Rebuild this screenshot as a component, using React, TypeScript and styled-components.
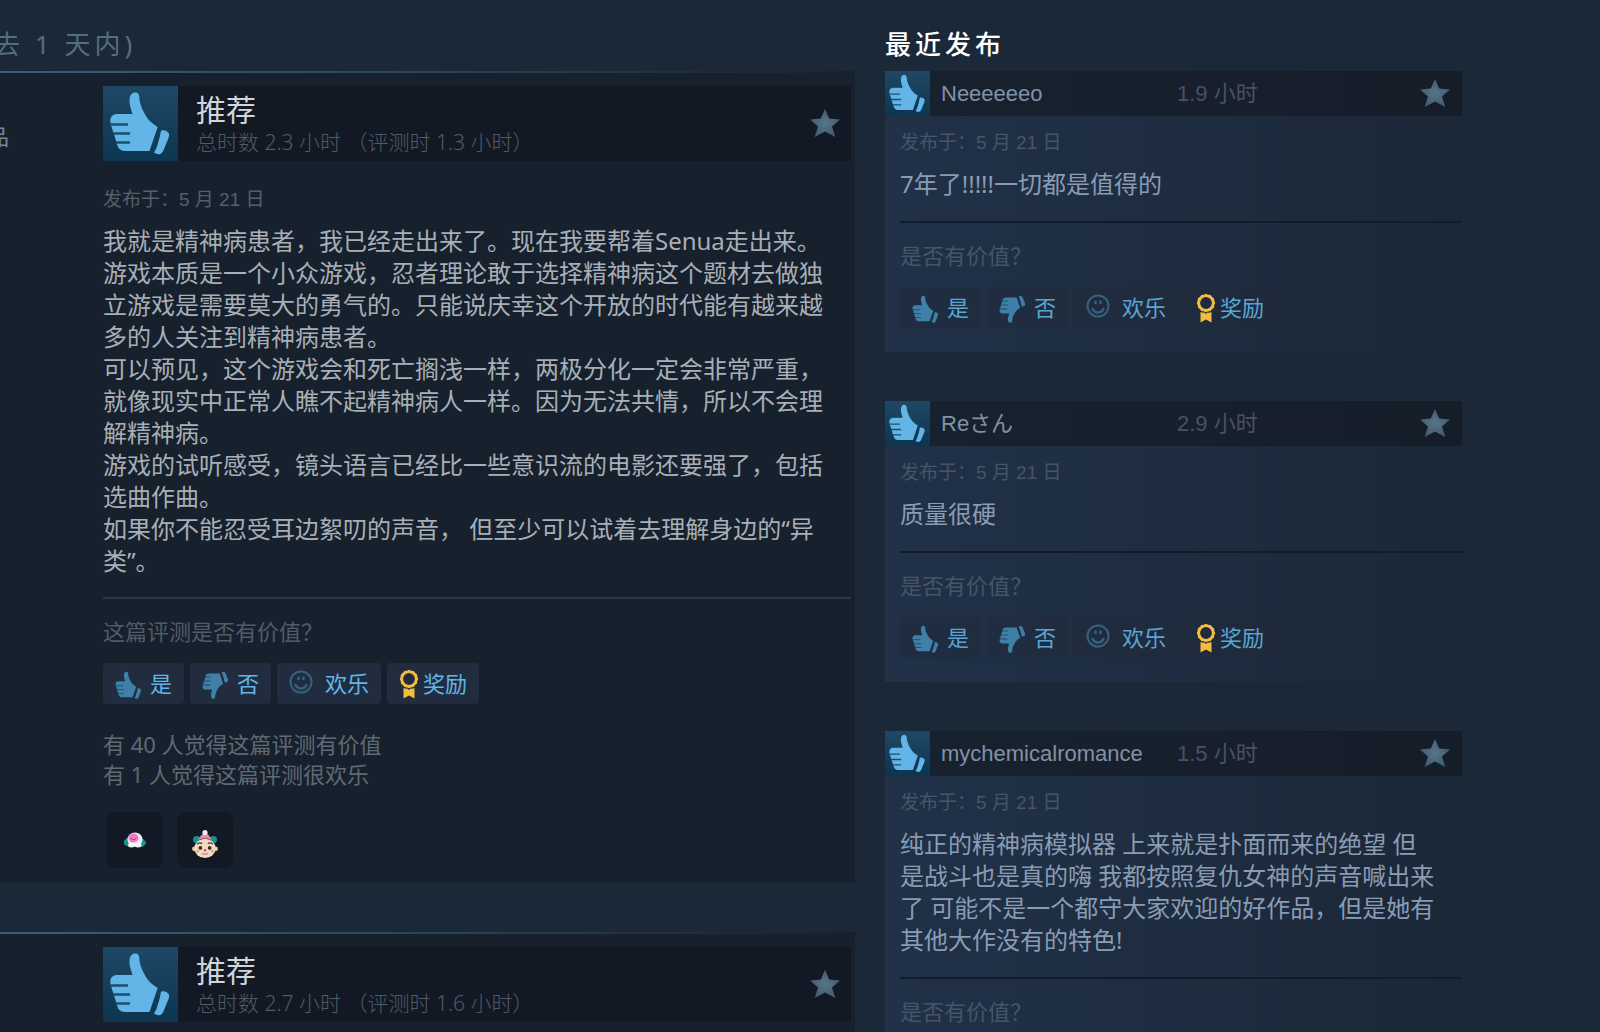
import React from 'react';
import styled, { createGlobalStyle, css } from 'styled-components';

const UI = `"Noto Sans", "Noto Sans CJK SC", sans-serif`;
const ARIAL = `"Liberation Sans", "Noto Sans CJK SC", sans-serif`;

const GlobalStyle = createGlobalStyle`
  *, *::before, *::after { box-sizing: border-box; }
  body {
    margin: 0;
    background: #1b2838;
    color: #a4abb3;
    font-family: ${UI};
  }
  h2, h3, p { margin: 0; }
`;

const Page = styled.main`
  display: grid;
  grid-template-columns: minmax(0, 1fr) 577px;
  column-gap: 30px;
  min-height: 100vh;
  padding-right: 138px;
  overflow: hidden;
`;

const Column = styled.section<{ $bleed?: boolean }>`
  display: flex;
  flex-direction: column;
  margin-left: ${(p) => (p.$bleed ? '-13px' : '0')};
`;

const Heading = styled.h2<{ $muted?: boolean }>`
  height: 71px;
  padding: 24px 0 0 ${(p) => (p.$muted ? '7px' : '0')};
  font-size: 26px;
  line-height: 40px;
  letter-spacing: 4px;
  white-space: nowrap;
  font-weight: ${(p) => (p.$muted ? 400 : 500)};
  color: ${(p) => (p.$muted ? '#536f7f' : '#ffffff')};
`;

const stacked = css`
  & + & { margin-top: 49px; }
  &:last-child { flex: 1; padding-bottom: 0; }
`;

const Review = styled.article`
  display: grid;
  grid-template-columns: 116px minmax(0, 1fr);
  align-content: start;
  padding: 15px 4px 15px 0;
  background:
    linear-gradient(to right, #3a6078, #2b4558 50%, #17212d) top / 100% 2px no-repeat,
    #17212d;
  ${stacked}
`;

const Author = styled.div`
  padding-top: 34px;
  font-size: 22px;
  line-height: 32px;
  color: #7b8794;
`;

const Verdict = styled.header`
  display: flex;
  align-items: center;
  height: 75px;
  padding-right: 11px;
  background: #121924;
`;

const ThumbTile = styled.span<{ $size: number }>`
  display: flex;
  flex: none;
  width: ${(p) => p.$size}px;
  height: ${(p) => p.$size}px;
  background: linear-gradient(#1e4865, #0b3550);
`;

const VerdictText = styled.div`
  flex: 1;
  padding-left: 18px;
`;

const VerdictTitle = styled.h3`
  font-size: 30px;
  line-height: 36px;
  font-weight: 400;
  color: #d2d5d9;
`;

const VerdictHours = styled.p`
  font-size: 21px;
  line-height: 28px;
  font-weight: 300;
  color: #505b66;
`;

const Posted = styled.p<{ $top: number; $color: string }>`
  margin-top: ${(p) => p.$top}px;
  font-family: ${ARIAL};
  font-size: 19px;
  line-height: 24px;
  color: ${(p) => p.$color};
`;

const Body = styled.p<{ $recent?: boolean }>`
  margin-top: 13px;
  padding-right: ${(p) => (p.$recent ? '24px' : '16px')};
  font-size: 24px;
  line-height: 32px;
  white-space: pre-line;
  color: ${(p) => (p.$recent ? '#8a9cb3' : '#a8afb7')};
`;

const Rule = styled.hr<{ $color: string }>`
  width: 100%;
  height: 2px;
  margin: 20px 0 0;
  border: 0;
  background: ${(p) => p.$color};
`;

const Question = styled.p<{ $color: string }>`
  margin-top: 16px;
  font-size: 22px;
  line-height: 32px;
  color: ${(p) => p.$color};
`;

const Votes = styled.div`
  display: flex;
  gap: 6px;
  margin-top: 16px;
`;

const VoteButton = styled.button<{ $faint?: boolean; $gap: number }>`
  display: flex;
  align-items: center;
  gap: ${(p) => p.$gap}px;
  height: 41px;
  padding: 0 12px 2px;
  border: 0;
  border-radius: 4px;
  background: ${(p) => (p.$faint ? 'rgba(34, 43, 60, 0.6)' : '#212d3e')};
  color: ${(p) => (p.$faint ? '#59a6d4' : '#62b5e8')};
  font-family: ${UI};
  font-size: 22px;
  line-height: 32px;
  cursor: pointer;
`;

const Counts = styled.p`
  margin-top: 25px;
  font-size: 22px;
  line-height: 30px;
  white-space: pre-line;
  color: #5f6a75;
`;

const Awards = styled.div`
  display: flex;
  gap: 14px;
  margin-top: 23px;
  padding-left: 4px;
`;

const AwardTile = styled.span`
  display: grid;
  place-items: center;
  width: 56px;
  height: 56px;
  border-radius: 8px;
  background: #121924;
`;

const Recent = styled.article`
  padding-bottom: 24px;
  background: linear-gradient(to right, #203148, #1e2d41 45%, #1b2838 95%);
  ${stacked}
`;

const RecentHeader = styled.header`
  display: grid;
  grid-template-columns: 45px 247px minmax(0, 1fr) auto;
  align-items: center;
  height: 45px;
  padding-right: 12px;
  font-family: ${ARIAL};
  font-size: 22px;
  line-height: 32px;
  background: linear-gradient(to right, #18222f, #151d29);
`;

const Name = styled.a`
  padding-left: 11px;
  color: #8092a7;
  text-decoration: none;
`;

const Hours = styled.span`
  color: #465361;
`;

const RecentContent = styled.div`
  padding-left: 15px;

  ${Rule} { margin-top: 21px; }
`;

const Hand = ({ color, line }: { color: string; line: string }) => (
  <>
    <path
      fill={color}
      d="M26.5 13C27 8 30 6 33 6.500C36 7 36.500 10 36.500 14C37.500 20 40 25 43 30C46 35 50 38 54.700 41L46.500 65H22C17 65 15 62 14 58L8 39C6 33 8 28 14 28H29.500C28 23 26 18 26.500 13Z"
    />
    <path fill={color} d="M58 44.500Q63 43 66 47.500Q66.500 49 65.500 52L60 65.500Q58 69 54 68L51 66.500Q54 62 55 57Q57 51 58 44.500Z" />
    <path stroke={line} strokeWidth="2.400" strokeLinecap="round" d="M8 38.500H24M11 47.500H26M14 56.500H26" />
  </>
);

const BigThumb = () => (
  <svg viewBox="0 0 75 75" width="100%" height="100%" fill="none" aria-hidden="true">
    <Hand color="#62b5e6" line="#1b4f70" />
  </svg>
);

const VoteThumb = ({ down }: { down?: boolean }) => (
  <svg viewBox="6 -7 62 76" width="27" height="33" fill="none" aria-hidden="true">
    <g transform={down ? 'matrix(1 0 0 -1 0 75)' : undefined}>
      <Hand color="#3f80a9" line="#28516f" />
    </g>
  </svg>
);

const Star = () => (
  <svg viewBox="0 0 30 30" width="30" height="30" aria-hidden="true">
    <defs>
      <radialGradient id="star">
        <stop offset="0" stopColor="#567489" />
        <stop offset="1" stopColor="#435d70" />
      </radialGradient>
    </defs>
    <path
      fill="url(#star)"
      d="M15 0L19.200 9.500L30 10.500L22 17.500L25.300 28L15 22.500L4.700 28L8 17.500L0 10.500L10.800 9.500Z"
    />
  </svg>
);

const Smile = () => (
  <svg viewBox="0 -1 24 28" width="24" height="28" fill="none" stroke="#35617f" strokeWidth="2" aria-hidden="true">
    <circle cx="12" cy="12" r="10.500" />
    <path d="M6 14Q8 18.500 12 18.500T18 14" strokeWidth="2.400" />
    <path d="M9.500 6.500V10M14.500 6.500V10" strokeWidth="2.400" />
  </svg>
);

const scallops = Array.from({ length: 12 }, (_, i) => {
  const a = (i * Math.PI) / 6;
  return { x: 10 + 7.6 * Math.cos(a), y: 10 + 7.6 * Math.sin(a) };
});

const Rosette = () => (
  <svg viewBox="0 -2 20 32" width="20" height="32" aria-hidden="true">
    <circle cx="10" cy="10" r="7.300" fill="none" stroke="#f2bd3c" strokeWidth="2.800" />
    {scallops.map((s, i) => (
      <circle key={i} cx={s.x} cy={s.y} r="1.600" fill="#f2bd3c" />
    ))}
    <path fill="#f2bd3c" d="M4.500 19Q7 20 8.500 19.500L10 21L11.500 19.500Q13 20 15.500 19V29.500L10 26.500L4.500 29.500Z" />
  </svg>
);

const Dizzy = () => (
  <svg viewBox="0 0 24 18" width="24" height="18" aria-hidden="true">
    <path fill="#17968f" d="M4 7Q0 9 1 13Q3 16 7 15L19 16Q23 14 23 11Q21 9 19 7Q17 2 12 2Z" />
    <ellipse cx="12" cy="8.500" rx="7.500" ry="7" fill="#f1eaf2" />
    <ellipse cx="8.500" cy="14" rx="3.500" ry="2.500" fill="#f7f4f7" />
    <ellipse cx="15" cy="14" rx="3.500" ry="2.500" fill="#f7f4f7" />
    <ellipse cx="10.500" cy="7" rx="5" ry="4.500" fill="#ef7fc2" />
    <path d="M7.500 7Q10.500 10.500 13.500 7" fill="none" stroke="#a93f86" />
  </svg>
);

const Jester = () => (
  <svg viewBox="0 -8 28 40" width="26" height="37" aria-hidden="true">
    <circle cx="5" cy="11" r="4" fill="#1d8f8b" />
    <circle cx="23" cy="11" r="4" fill="#1d8f8b" />
    <circle cx="2.500" cy="21" r="2.500" fill="#e9c7a8" />
    <circle cx="25.500" cy="21" r="2.500" fill="#e9c7a8" />
    <ellipse cx="14" cy="20.500" rx="11.500" ry="10.500" fill="#f1dbc5" />
    <path fill="#ee86b4" d="M7 11Q9 6 14 4Q19 6 21 11Q14 8.500 7 11Z" />
    <circle cx="14" cy="3.500" r="2.800" fill="#f4e6ea" />
    <path d="M5.500 16Q8 13.500 11 15.500M17 15.500Q20 13.500 22.500 16" stroke="#50382f" strokeWidth="1.300" fill="none" />
    <circle cx="9" cy="20" r="2" fill="#3b2c2a" />
    <circle cx="19" cy="20" r="2" fill="#3b2c2a" />
    <circle cx="6" cy="23.500" r="1.600" fill="#e9a56c" />
    <circle cx="22" cy="23.500" r="1.600" fill="#e9a56c" />
    <circle cx="14" cy="22.500" r="1.400" fill="#e04f4c" />
    <path d="M10.500 26Q14 28 17.500 26" stroke="#d98497" strokeWidth="1.600" fill="none" />
  </svg>
);

const VoteBar = ({ faint }: { faint?: boolean }) => (
  <Votes>
    <VoteButton type="button" $faint={faint} $gap={8}><VoteThumb />是</VoteButton>
    <VoteButton type="button" $faint={faint} $gap={8}><VoteThumb down />否</VoteButton>
    <VoteButton type="button" $faint={faint} $gap={12}><Smile />欢乐</VoteButton>
    <VoteButton type="button" $faint={faint} $gap={4}><Rosette />奖励</VoteButton>
  </Votes>
);

const VerdictBar = ({ total, at }: { total: string; at: string }) => (
  <Verdict>
    <ThumbTile $size={75}><BigThumb /></ThumbTile>
    <VerdictText>
      <VerdictTitle>推荐</VerdictTitle>
      <VerdictHours>总时数 {total} 小时 （评测时 {at} 小时）</VerdictHours>
    </VerdictText>
    <Star />
  </Verdict>
);

const reviewText = `我就是精神病患者，我已经走出来了。现在我要帮着Senua走出来。
游戏本质是一个小众游戏，忍者理论敢于选择精神病这个题材去做独立游戏是需要莫大的勇气的。只能说庆幸这个开放的时代能有越来越多的人关注到精神病患者。
可以预见，这个游戏会和死亡搁浅一样，两极分化一定会非常严重，就像现实中正常人瞧不起精神病人一样。因为无法共情，所以不会理解精神病。
游戏的试听感受，镜头语言已经比一些意识流的电影还要强了，包括选曲作曲。
如果你不能忍受耳边絮叨的声音， 但至少可以试着去理解身边的“异类”。`;

const recent = [
  { name: 'Neeeeeeo', hours: '1.9', text: '7年了!!!!!一切都是值得的', votes: true },
  { name: 'Reさん', hours: '2.9', text: '质量很硬', votes: true },
  {
    name: 'mychemicalromance',
    hours: '1.5',
    text: '纯正的精神病模拟器 上来就是扑面而来的绝望 但是战斗也是真的嗨 我都按照复仇女神的声音喊出来了 可能不是一个都守大家欢迎的好作品，但是她有其他大作没有的特色!',
    votes: false,
  },
];

export default function App() {
  return (
    <>
      <GlobalStyle />
      <Page lang="zh-CN">
        <Column $bleed>
          <Heading $muted>去 1 天内)</Heading>
          <Review>
            <Author>品</Author>
            <div>
              <VerdictBar total="2.3" at="1.3" />
              <Posted $top={27} $color="#53606b">发布于：5 月 21 日</Posted>
              <Body>{reviewText}</Body>
              <Rule $color="#2b3743" />
              <Question $color="#505c67">这篇评测是否有价值？</Question>
              <VoteBar />
              <Counts>{'有 40 人觉得这篇评测有价值\n有 1 人觉得这篇评测很欢乐'}</Counts>
              <Awards>
                <AwardTile><Dizzy /></AwardTile>
                <AwardTile><Jester /></AwardTile>
              </Awards>
            </div>
          </Review>
          <Review>
            <Author />
            <VerdictBar total="2.7" at="1.6" />
          </Review>
        </Column>
        <Column>
          <Heading>最近发布</Heading>
          {recent.map((r) => (
            <Recent key={r.name}>
              <RecentHeader>
                <ThumbTile $size={45}><BigThumb /></ThumbTile>
                <Name href="#">{r.name}</Name>
                <Hours>{r.hours} 小时</Hours>
                <Star />
              </RecentHeader>
              <RecentContent>
                <Posted $top={15} $color="#465568">发布于：5 月 21 日</Posted>
                <Body $recent>{r.text}</Body>
                <Rule $color="#121b28" />
                <Question $color="#465568">是否有价值？</Question>
                {r.votes && <VoteBar faint />}
              </RecentContent>
            </Recent>
          ))}
        </Column>
      </Page>
    </>
  );
}
